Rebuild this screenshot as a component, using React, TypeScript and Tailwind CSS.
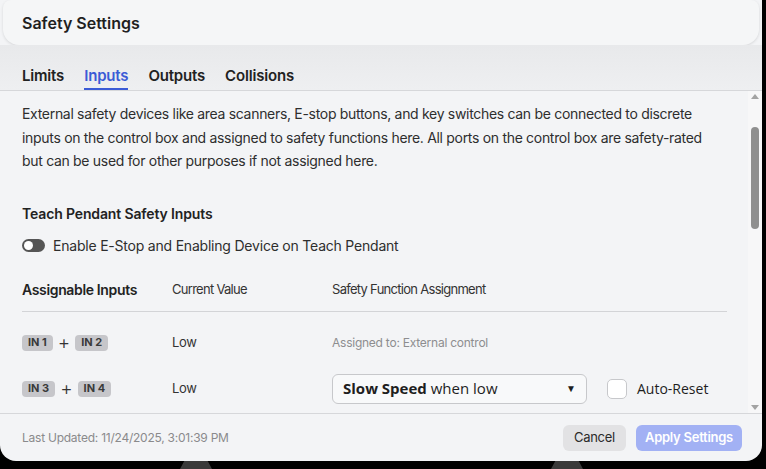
import React from "react";

const inter = { fontFamily: "Inter, 'Liberation Sans', sans-serif" };

function Badge({ label }: { label: string }) {
    return (
        <span className="inline-flex h-[16px] items-center rounded-[4px] bg-[#c6c6ca] px-[6px] text-[11px] font-bold leading-none text-[#3a3a3a]">
            {label}
        </span>
    );
}

function InputPair({ a, b }: { a: string; b: string }) {
    return (
        <div className="flex items-center gap-[5px]">
            <Badge label={a} />
            <span className="text-[19px] font-light leading-none text-[#333]">+</span>
            <Badge label={b} />
        </div>
    );
}

export default function App() {
    return (
        <div className="relative h-[469px] w-[766px] overflow-hidden bg-black" style={inter}>
            {/* shapes behind the dialog */}
            <div className="absolute bottom-0 left-[180px] h-[12px] w-[32px] bg-[#3a3a3a] [clip-path:polygon(20%_0,80%_0,100%_100%,0_100%)]" />
            <div className="absolute bottom-0 left-[551px] h-[12px] w-[32px] bg-[#3a3a3a] [clip-path:polygon(20%_0,80%_0,100%_100%,0_100%)]" />

            <div className="relative flex h-[461px] w-[762px] flex-col overflow-hidden rounded-b-[16px] bg-[#f3f4f6]">
                {/* header */}
                <div className="mx-[3px] flex h-[45px] shrink-0 items-center rounded-b-[16px] rounded-t-[8px] bg-[#f5f6f7] px-[19px] shadow-[0_1px_3px_rgba(0,0,0,0.12)]">
                    <h1 className="text-[16px] font-semibold text-[#1f1f1f]">Safety Settings</h1>
                </div>

                {/* tabs */}
                <div className="flex h-[46px] shrink-0 items-end gap-[20px] border-b border-[#d6d7da] bg-gradient-to-b from-[#e8e9eb] to-[#eeeff1] px-[22px]">
                    <div className="pb-[3px] text-[15px] font-semibold tracking-[-0.012em] text-[#222]">Limits</div>
                    <div className="border-b-2 border-[#3b5bd6] pb-[1px] text-[15px] font-semibold tracking-[-0.012em] text-[#3b5bd6]">Inputs</div>
                    <div className="pb-[3px] text-[15px] font-semibold tracking-[-0.012em] text-[#222]">Outputs</div>
                    <div className="pb-[3px] text-[15px] font-semibold tracking-[-0.012em] text-[#222]">Collisions</div>
                </div>

                {/* scrolling body */}
                <div className="flex min-h-0 flex-1">
                    <div className="min-w-0 flex-1 overflow-hidden pl-[22px] pr-[21px] pt-[11px]">
                        <p className="w-[690px] text-[14px] leading-[23.5px] tracking-[-0.022em] text-[#2e2e2e]">
                            External safety devices like area scanners, E-stop buttons, and key switches can be connected to discrete inputs on the control box and assigned to safety functions here. All ports on the control box are safety-rated but can be used for other purposes if not assigned here.
                        </p>

                        <h2 className="mt-[31px] text-[14px] font-semibold leading-[20px] tracking-[-0.01em] text-[#222]">Teach Pendant Safety Inputs</h2>

                        <div className="mt-[12px] flex h-[20px] items-center gap-[8px]">
                            <div className="flex h-[13px] w-[23px] items-center rounded-full bg-[#555] px-[2px]">
                                <div className="h-[9px] w-[9px] rounded-full bg-white" />
                            </div>
                            <span className="text-[14px] tracking-[-0.015em] text-[#2e2e2e]">Enable E-Stop and Enabling Device on Teach Pendant</span>
                        </div>

                        <div className="mt-[24px] flex items-center border-b border-[#d3d4d7] pb-[11px]">
                            <div className="w-[150px] text-[14px] font-semibold leading-[20px] tracking-[-0.025em] text-[#222]">Assignable Inputs</div>
                            <div className="w-[160px] text-[13px] tracking-[-0.055em] text-[#333]">Current Value</div>
                            <div className="text-[13px] tracking-[-0.055em] text-[#333]">Safety Function Assignment</div>
                        </div>

                        <div className="pt-[8px]">
                            <div className="flex h-[46px] items-center">
                                <div className="w-[150px]">
                                    <InputPair a="IN 1" b="IN 2" />
                                </div>
                                <div className="w-[160px] text-[13px] tracking-[-0.03em] text-[#333]">Low</div>
                                <div className="text-[12px] tracking-[-0.02em] text-[#8d8d8f]">Assigned to: External control</div>
                            </div>

                            <div className="flex h-[46px] items-center">
                                <div className="w-[150px]">
                                    <InputPair a="IN 3" b="IN 4" />
                                </div>
                                <div className="w-[160px] text-[13px] tracking-[-0.03em] text-[#333]">Low</div>
                                <div
                                    className="flex h-[30px] w-[255px] items-center justify-between rounded-[6px] border border-[#c7c8cb] bg-[#f8f9fa] pl-[10px] pr-[10px] text-[15px] text-[#1e1e1e]"
                                    style={{ fontFamily: "'Open Sans', 'Noto Sans', sans-serif" }}
                                >
                                    <span>
                                        <b className="font-bold">Slow Speed</b> when low
                                    </span>
                                    <span className="text-[10px]">▼</span>
                                </div>
                                <div className="ml-[20px] h-[20px] w-[20px] rounded-[5px] border border-[#c7c8cb] bg-white" />
                                <span
                                    className="ml-[10px] text-[14px] text-[#1e1e1e]"
                                    style={{ fontFamily: "'Open Sans', 'Noto Sans', sans-serif" }}
                                >
                                    Auto-Reset
                                </span>
                            </div>
                        </div>
                    </div>

                    {/* scrollbar */}
                    <div className="flex w-[14px] shrink-0 flex-col items-center bg-[#f7f7f8] py-[3px]">
                        <div className="h-0 w-0 border-x-[4px] border-b-[5px] border-x-transparent border-b-[#a3a3a3]" />
                        <div className="mt-[28px] h-[102px] w-[8px] rounded-full bg-[#8f8f8f]" />
                        <div className="flex-1" />
                        <div className="h-0 w-0 border-x-[4px] border-t-[5px] border-x-transparent border-t-[#a3a3a3]" />
                    </div>
                </div>

                {/* footer */}
                <div className="flex h-[48px] shrink-0 items-center justify-between border-t border-[#d6d7da] pl-[22px] pr-[20px]">
                    <span className="text-[12px] tracking-[-0.02em] text-[#8a8a8c]">Last Updated: 11/24/2025, 3:01:39 PM</span>
                    <div className="flex items-center gap-[10px]">
                        <button className="h-[26px] rounded-[6px] bg-[#e2e2e4] px-[11px] text-[13px] tracking-[-0.02em] text-[#2a2a2a]">Cancel</button>
                        <button className="h-[26px] rounded-[6px] bg-[#a2b1f4] px-[9px] text-[13px] font-semibold tracking-[-0.02em] text-white">Apply Settings</button>
                    </div>
                </div>
            </div>
        </div>
    );
}
